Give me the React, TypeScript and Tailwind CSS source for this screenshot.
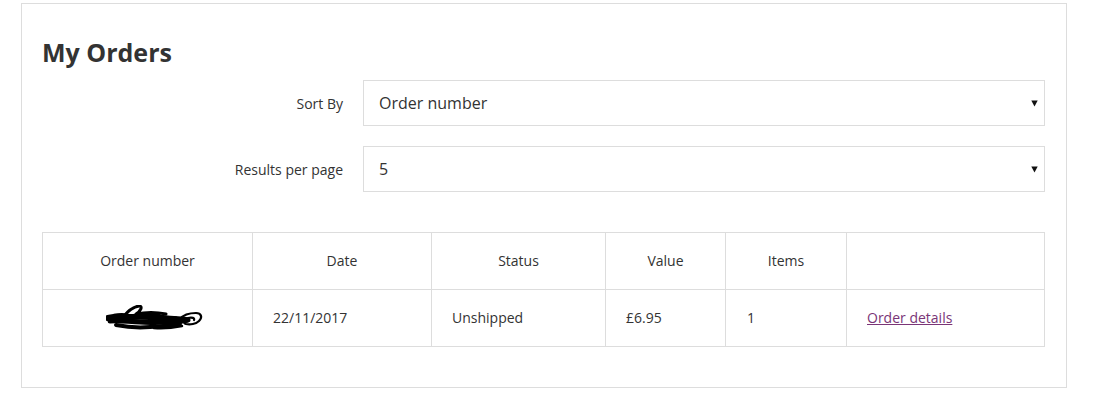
import React from "react";

function Scribble() {
  return (
    <svg width="98" height="26" viewBox="0 0 98 26" className="block">
      <g fill="none" stroke="#000" strokeLinecap="round" strokeLinejoin="round">
        <path d="M2 13 C10 11 18 12 26 12 C36 11 46 12 56 13 C64 14 72 14 80 15" strokeWidth="6" />
        <path d="M4 16 C14 15 24 17 34 17 C44 18 54 17 64 17 C70 17 76 16 82 15" strokeWidth="5" />
        <path d="M18 11 C22 6 27 2 33 1 C37 1 35 6 30 9 C40 7 50 7 60 9" strokeWidth="3" />
        <path d="M10 20 C20 22 32 23 44 22 C54 21 64 21 74 19" strokeWidth="4" />
        <path d="M40 11 C46 9 52 10 58 12 C62 13 66 13 70 13" strokeWidth="3.5" />
        <path d="M74 14 C78 9 84 8 90 8 C95 8 97 12 93 16 C90 19 84 20 80 19 C77 18 78 14 82 13 C86 12 89 13 88 15" strokeWidth="2.2" />
        <path d="M48 23 C58 24 66 23 76 21" strokeWidth="2.5" />
        <path d="M8 10 C14 9 18 9 22 10" strokeWidth="2.5" />
      </g>
    </svg>
  );
}

function SelectBox({ value }: { value: string }) {
  return (
    <div className="flex-1 h-[46px] border border-[#dddddd] bg-white flex items-center justify-between pl-[15px] pr-[6px]">
      <span className="text-[16px] text-[#333333]">{value}</span>
      <svg width="7" height="7" viewBox="0 0 7 7" className="block">
        <path d="M0.3 0.5 H6.7 L3.5 6.5 Z" fill="#111" />
      </svg>
    </div>
  );
}

export default function App() {
  return (
    <div className="bg-white min-h-[417px] w-[1117px] pt-[3px] pl-[21px]" style={{ fontFamily: '"Open Sans", "Liberation Sans", sans-serif' }}>
      <div className="w-[1046px] h-[385px] border border-[#dddddd] pt-[33px] pl-[20px] pr-[21px]">
        <h1 className="text-[25px] leading-[30px] font-bold text-[#333333]">My Orders</h1>
        <div className="mt-[13px] flex flex-col gap-[20px]">
          <div className="flex items-center">
            <div className="w-[321px] shrink-0 pr-[20px] text-right text-[14px] text-[#333333]">Sort By</div>
            <SelectBox value="Order number" />
          </div>
          <div className="flex items-center">
            <div className="w-[321px] shrink-0 pr-[20px] text-right text-[14px] text-[#333333]">Results per page</div>
            <SelectBox value="5" />
          </div>
        </div>
        <table className="mt-[40px] border-collapse table-fixed w-[1002px] text-[14px] text-[#333333]">
          <colgroup>
            <col className="w-[210px]" />
            <col className="w-[179px]" />
            <col className="w-[174px]" />
            <col className="w-[120px]" />
            <col className="w-[121px]" />
            <col className="w-[198px]" />
          </colgroup>
          <thead>
            <tr className="h-[57px]">
              <th className="border border-[#dddddd] font-normal text-center pb-[2px]">Order number</th>
              <th className="border border-[#dddddd] font-normal text-center pb-[2px]">Date</th>
              <th className="border border-[#dddddd] font-normal text-center pb-[2px]">Status</th>
              <th className="border border-[#dddddd] font-normal text-center pb-[2px]">Value</th>
              <th className="border border-[#dddddd] font-normal text-center pb-[2px]">Items</th>
              <th className="border border-[#dddddd] font-normal"></th>
            </tr>
          </thead>
          <tbody>
            <tr className="h-[57px]">
              <td className="border border-[#dddddd]">
                <div className="flex justify-center pl-[14px]">
                  <Scribble />
                </div>
              </td>
              <td className="border border-[#dddddd] pl-[20px] pb-[2px]">22/11/2017</td>
              <td className="border border-[#dddddd] pl-[20px] pb-[2px]">Unshipped</td>
              <td className="border border-[#dddddd] pl-[20px] pb-[2px]">£6.95</td>
              <td className="border border-[#dddddd] pl-[21px] pb-[2px]">1</td>
              <td className="border border-[#dddddd] pl-[20px] pb-[2px]">
                <a href="#" className="text-[#7a3577] underline">Order details</a>
              </td>
            </tr>
          </tbody>
        </table>
      </div>
    </div>
  );
}
